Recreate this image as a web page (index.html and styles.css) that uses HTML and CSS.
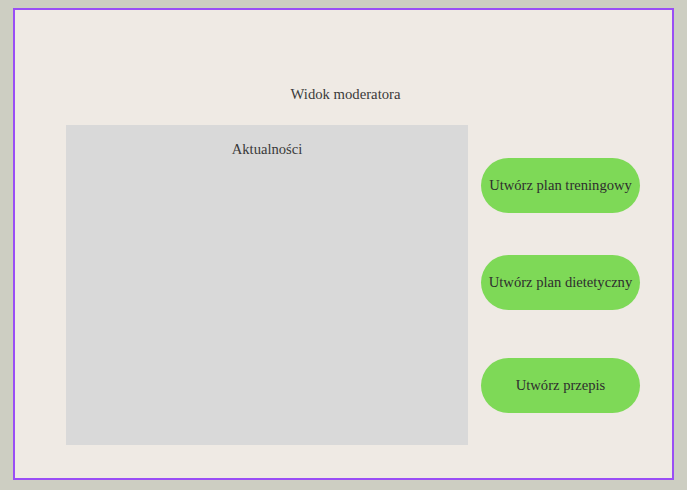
FILE: index.html
```html
<!DOCTYPE html>
<html lang="pl">
<head>
<meta charset="utf-8">
<title>Widok moderatora</title>
<link rel="stylesheet" href="styles.css">
</head>
<body>
<div class="frame">
  <h1 class="title">Widok moderatora</h1>
  <div class="content">
    <section class="news">
      <h2 class="news-title">Aktualności</h2>
    </section>
    <div class="actions">
      <button class="btn btn-1">Utwórz plan treningowy</button>
      <button class="btn btn-2">Utwórz plan dietetyczny</button>
      <button class="btn btn-3">Utwórz przepis</button>
    </div>
  </div>
</div>
</body>
</html>
```
FILE: styles.css
```css
html, body {
  margin: 0;
  padding: 0;
  background: #cdcec2;
}
body {
  padding: 8px 13px 0 13px;
  font-family: "Liberation Serif", "DejaVu Serif", serif;
  color: #3a3a3a;
}
.frame {
  box-sizing: border-box;
  width: 661px;
  height: 472px;
  border: 2px solid #9a4ef5;
  background: #efeae4;
  padding: 0 32px 0 51px;
  display: flex;
  flex-direction: column;
}
.title {
  margin: 74px 0 0 -51px;
  width: 661px;
  text-align: center;
  font-size: 14.7px;
  font-weight: normal;
  line-height: 20px;
  height: 20px;
}
.content {
  margin-top: 21px;
  display: flex;
  gap: 13px;
}
.news {
  width: 402px;
  height: 320px;
  background: #d9d9d9;
}
.news-title {
  margin: 15px 0 0 0;
  text-align: center;
  font-size: 14.6px;
  font-weight: normal;
  line-height: 18px;
  color: #3a3a3a;
}
.actions {
  display: flex;
  flex-direction: column;
  width: 159px;
}
.btn {
  height: 55px;
  width: 159px;
  border: none;
  border-radius: 28px;
  background: #7ed957;
  font-family: "Liberation Serif", "DejaVu Serif", serif;
  font-size: 14.6px;
  color: #2e2e2e;
  padding: 0;
}
.btn-1 { margin-top: 33px; }
.btn-2 { margin-top: 42px; }
.btn-3 { margin-top: 48px; }
```
